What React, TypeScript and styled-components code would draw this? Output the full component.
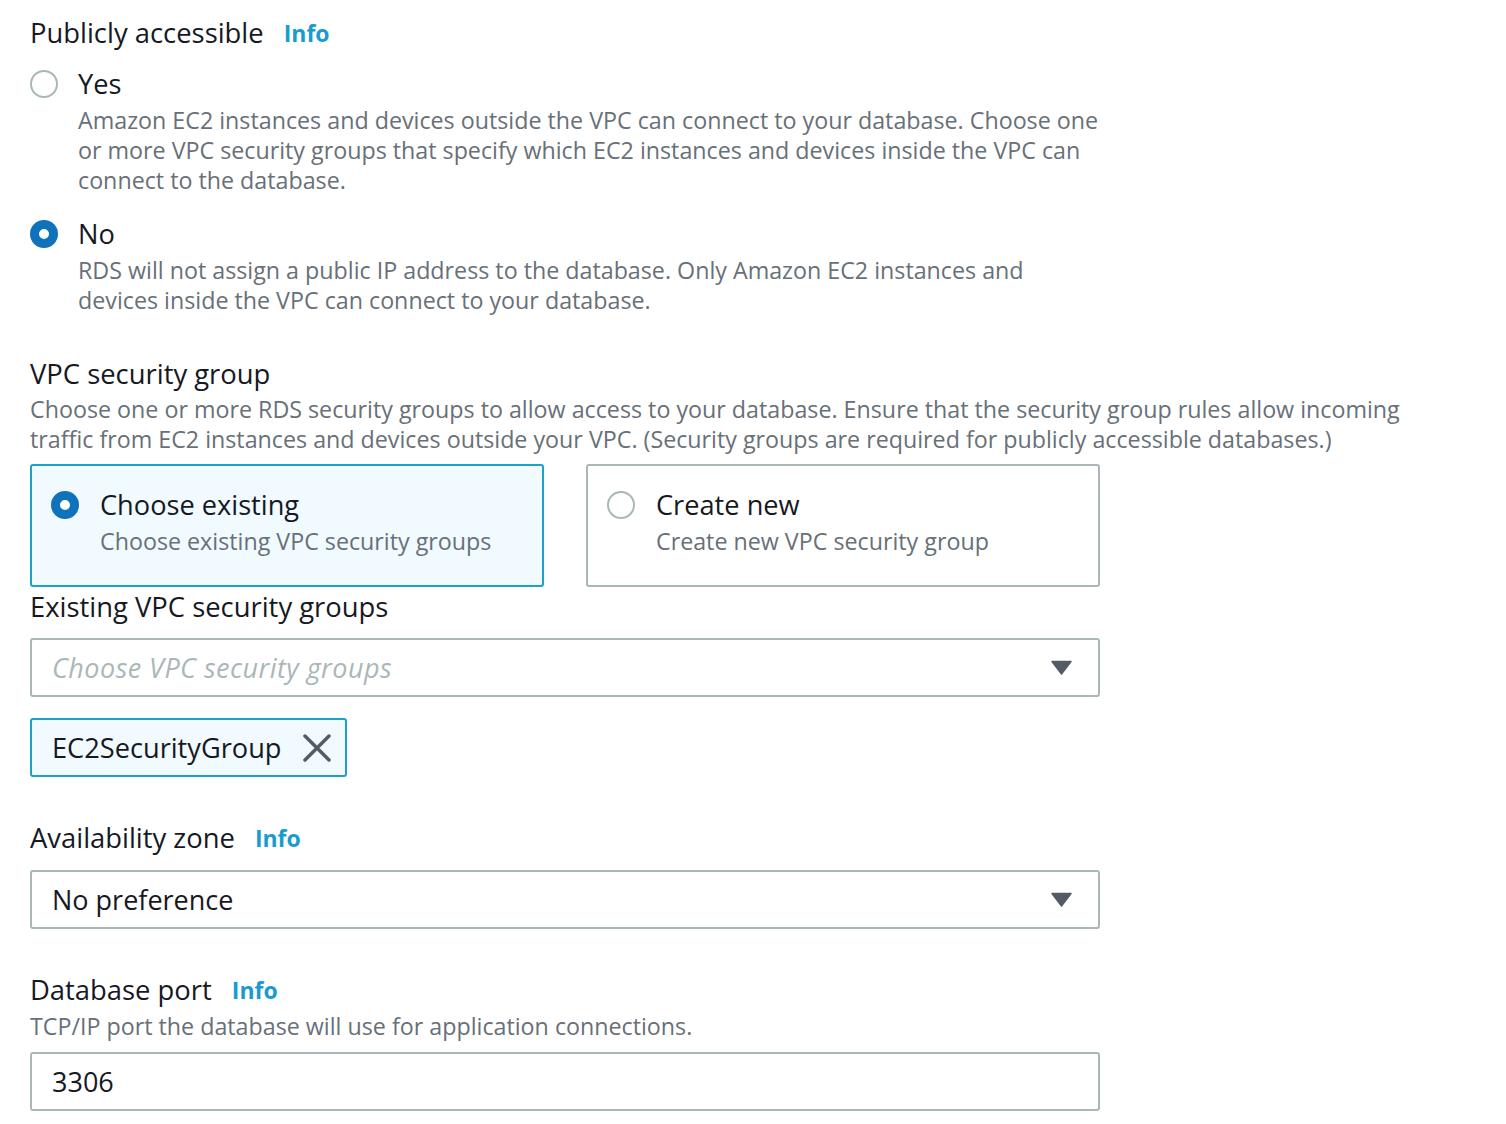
import React from "react";
import styled, { createGlobalStyle } from "styled-components";

const colors = {
  text: "#16191f",
  muted: "#687078",
  link: "#1a9bcf",
  blue: "#0f73bb",
  accent: "#1ea1c9",
  border: "#aab7b8",
  selectedBg: "#f1faff",
  icon: "#545b64",
  placeholder: "#aab7b8",
};

const GlobalStyle = createGlobalStyle`
  html, body {
    margin: 0;
    padding: 0;
    background: #ffffff;
  }
  body {
    font-family: "Open Sans", "Noto Sans", Arial, sans-serif;
    color: ${colors.text};
  }
`;

const Page = styled.div`
  padding: 13px 0 0 30px;
  display: flex;
  flex-direction: column;
`;

const Field = styled.section<{ $gap?: number }>`
  display: flex;
  flex-direction: column;
  margin-top: ${(p) => p.$gap ?? 0}px;
`;

const Label = styled.div`
  display: flex;
  align-items: center;
  gap: 20px;
  font-size: 27.4px;
  line-height: 40px;
  color: ${colors.text};
`;

const InfoLink = styled.a`
  font-size: 23px;
  font-weight: 700;
  color: ${colors.link};
  text-decoration: none;
  cursor: pointer;
`;

const Description = styled.div<{ $gap?: number }>`
  font-size: 23.25px;
  line-height: 30px;
  color: ${colors.muted};
  white-space: nowrap;
  margin-top: ${(p) => p.$gap ?? 0}px;
`;

const RadioList = styled.div`
  display: flex;
  flex-direction: column;
  gap: 21px;
  margin-top: 13px;
  width: 1070px;
`;

const RadioItem = styled.label<{ $gap?: number }>`
  display: grid;
  grid-template-columns: 28px 1fr;
  column-gap: ${(p) => p.$gap ?? 20}px;
  cursor: pointer;
`;

const RadioDot = styled.span<{ $checked?: boolean }>`
  box-sizing: border-box;
  width: 28px;
  height: 28px;
  border-radius: 50%;
  margin-top: 4px;
  background: #fff;
  border: ${(p) => (p.$checked ? `9px solid ${colors.blue}` : `2px solid ${colors.border}`)};
`;

const RadioText = styled.div`
  display: flex;
  flex-direction: column;
`;

const RadioTitle = styled.div`
  font-size: 27.2px;
  line-height: 36px;
  color: ${colors.text};
`;

const Tiles = styled.div`
  display: grid;
  grid-template-columns: 1fr 1fr;
  column-gap: 42px;
  width: 1070px;
  margin-top: 10px;
`;

const Tile = styled.div<{ $selected?: boolean }>`
  box-sizing: border-box;
  height: 123px;
  padding: 21px 18px 0 19px;
  border-radius: 3px;
  border: 2px solid ${(p) => (p.$selected ? colors.accent : colors.border)};
  background: ${(p) => (p.$selected ? colors.selectedBg : "#fff")};
`;

const Box = styled.div<{ $gap?: number }>`
  box-sizing: border-box;
  width: 1070px;
  height: 59px;
  border: 2px solid ${colors.border};
  border-radius: 3px;
  display: flex;
  align-items: center;
  justify-content: space-between;
  padding: 0 26px 0 20px;
  margin-top: ${(p) => p.$gap ?? 11}px;
  font-size: 27px;
  color: ${colors.text};
`;

const Placeholder = styled.span`
  font-style: italic;
  letter-spacing: 0.45px;
  color: ${colors.placeholder};
`;

const Tokens = styled.div`
  display: flex;
  margin-top: 21px;
`;

const Token = styled.div`
  box-sizing: border-box;
  height: 59px;
  display: flex;
  align-items: center;
  gap: 22px;
  padding: 0 14px 0 20px;
  border: 2px solid ${colors.accent};
  border-radius: 3px;
  background: ${colors.selectedBg};
  font-size: 27.2px;
  color: ${colors.text};
`;

const Caret = () => (
  <svg width="21" height="15" viewBox="0 0 21 15">
    <path d="M1 1.5 L20 1.5 L10.5 14 Z" fill={colors.icon} stroke={colors.icon} strokeWidth="1.5" strokeLinejoin="round" />
  </svg>
);

const Close = () => (
  <svg width="28" height="28" viewBox="0 0 28 28">
    <path d="M2 2 L26 26 M26 2 L2 26" stroke={colors.icon} strokeWidth="3.5" strokeLinecap="round" />
  </svg>
);

export default function App() {
  return (
    <>
      <GlobalStyle />
      <Page>
        <Field>
          <Label>
            Publicly accessible <InfoLink>Info</InfoLink>
          </Label>
          <RadioList>
            <RadioItem>
              <RadioDot />
              <RadioText>
                <RadioTitle>Yes</RadioTitle>
                <Description $gap={3}>
                  Amazon EC2 instances and devices outside the VPC can connect to your database. Choose one
                  <br />
                  or more VPC security groups that specify which EC2 instances and devices inside the VPC can
                  <br />
                  connect to the database.
                </Description>
              </RadioText>
            </RadioItem>
            <RadioItem>
              <RadioDot $checked />
              <RadioText>
                <RadioTitle>No</RadioTitle>
                <Description $gap={3}>
                  RDS will not assign a public IP address to the database. Only Amazon EC2 instances and
                  <br />
                  devices inside the VPC can connect to your database.
                </Description>
              </RadioText>
            </RadioItem>
          </RadioList>
        </Field>

        <Field $gap={39}>
          <Label>VPC security group</Label>
          <Description>
            Choose one or more RDS security groups to allow access to your database. Ensure that the security group rules allow incoming
            <br />
            traffic from EC2 instances and devices outside your VPC. (Security groups are required for publicly accessible databases.)
          </Description>
          <Tiles>
            <Tile $selected>
              <RadioItem $gap={21}>
                <RadioDot $checked />
                <RadioText>
                  <RadioTitle>Choose existing</RadioTitle>
                  <Description $gap={3}>Choose existing VPC security groups</Description>
                </RadioText>
              </RadioItem>
            </Tile>
            <Tile>
              <RadioItem $gap={21}>
                <RadioDot />
                <RadioText>
                  <RadioTitle>Create new</RadioTitle>
                  <Description $gap={3}>Create new VPC security group</Description>
                </RadioText>
              </RadioItem>
            </Tile>
          </Tiles>
        </Field>

        <Field>
          <Label>Existing VPC security groups</Label>
          <Box>
            <Placeholder>Choose VPC security groups</Placeholder>
            <Caret />
          </Box>
          <Tokens>
            <Token>
              EC2SecurityGroup
              <Close />
            </Token>
          </Tokens>
        </Field>

        <Field $gap={41}>
          <Label>
            Availability zone <InfoLink>Info</InfoLink>
          </Label>
          <Box $gap={12}>
            <span>No preference</span>
            <Caret />
          </Box>
        </Field>

        <Field $gap={41}>
          <Label>
            Database port <InfoLink>Info</InfoLink>
          </Label>
          <Description $gap={1}>TCP/IP port the database will use for application connections.</Description>
          <Box $gap={11}>
            <span>3306</span>
          </Box>
        </Field>
      </Page>
    </>
  );
}
